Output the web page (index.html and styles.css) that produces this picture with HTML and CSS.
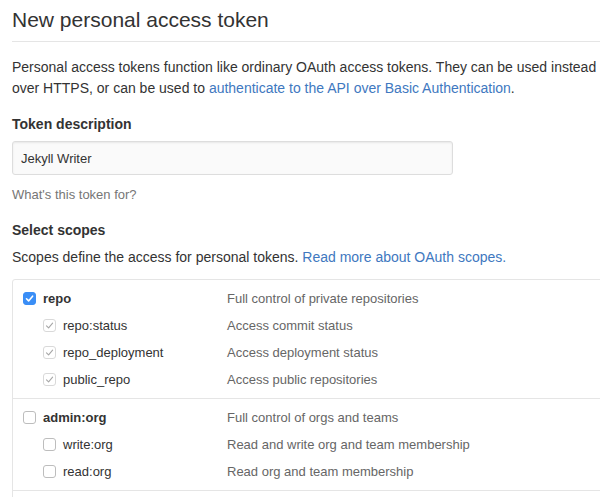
FILE: index.html
```html
<!DOCTYPE html>
<html lang="en">
<head>
<meta charset="utf-8">
<title>New personal access token</title>
<link rel="stylesheet" href="styles.css">
</head>
<body>
<main class="page">
  <div class="subhead">
    <h2 class="subhead-heading">New personal access token</h2>
  </div>
  <p class="intro">Personal access tokens function like ordinary OAuth access tokens. They can be used instead of a password for Git over HTTPS, or can be used to <a href="#">authenticate to the API over Basic Authentication</a>.</p>

  <dl class="form-group">
    <dt><label class="label" for="desc">Token description</label></dt>
    <dd>
      <input class="form-control" id="desc" type="text" value="Jekyll Writer">
      <p class="note">What's this token for?</p>
    </dd>
  </dl>

  <dl class="form-group">
    <dt><span class="label">Select scopes</span></dt>
    <dd>
      <p class="scopes-intro">Scopes define the access for personal tokens. <a href="#">Read more about OAuth scopes.</a></p>
      <div class="scopes">
        <div class="group">
          <div class="row">
            <span class="name top"><span class="cb checked"><svg viewBox="0 0 13 13" width="13" height="13"><path d="M3.5 6.8 L5.6 8.9 L9.6 4.2" fill="none" stroke="#fff" stroke-width="1.6" stroke-linecap="round" stroke-linejoin="round"/></svg></span>repo</span>
            <span class="desc">Full control of private repositories</span>
          </div>
          <div class="row">
            <span class="name sub"><span class="cb implied"><svg viewBox="0 0 13 13" width="13" height="13"><path d="M3.5 6.8 L5.6 8.9 L9.6 4.2" fill="none" stroke="#a6a6a6" stroke-width="1.1" stroke-linecap="round" stroke-linejoin="round"/></svg></span>repo:status</span>
            <span class="desc">Access commit status</span>
          </div>
          <div class="row">
            <span class="name sub"><span class="cb implied"><svg viewBox="0 0 13 13" width="13" height="13"><path d="M3.5 6.8 L5.6 8.9 L9.6 4.2" fill="none" stroke="#a6a6a6" stroke-width="1.1" stroke-linecap="round" stroke-linejoin="round"/></svg></span>repo_deployment</span>
            <span class="desc">Access deployment status</span>
          </div>
          <div class="row">
            <span class="name sub"><span class="cb implied"><svg viewBox="0 0 13 13" width="13" height="13"><path d="M3.5 6.8 L5.6 8.9 L9.6 4.2" fill="none" stroke="#a6a6a6" stroke-width="1.1" stroke-linecap="round" stroke-linejoin="round"/></svg></span>public_repo</span>
            <span class="desc">Access public repositories</span>
          </div>
        </div>
        <div class="group">
          <div class="row">
            <span class="name top"><span class="cb"></span>admin:org</span>
            <span class="desc">Full control of orgs and teams</span>
          </div>
          <div class="row">
            <span class="name sub"><span class="cb"></span>write:org</span>
            <span class="desc">Read and write org and team membership</span>
          </div>
          <div class="row">
            <span class="name sub"><span class="cb"></span>read:org</span>
            <span class="desc">Read org and team membership</span>
          </div>
        </div>
        <div class="group">
          <div class="row">
            <span class="name top"><span class="cb"></span>admin:public_key</span>
            <span class="desc">Full control of user public keys</span>
          </div>
          <div class="row">
            <span class="name sub"><span class="cb"></span>write:public_key</span>
            <span class="desc">Write user public keys</span>
          </div>
          <div class="row">
            <span class="name sub"><span class="cb"></span>read:public_key</span>
            <span class="desc">Read user public keys</span>
          </div>
        </div>
      </div>
    </dd>
  </dl>
</main>
</body>
</html>
```
FILE: styles.css
```css
html, body {
  margin: 0;
  padding: 0;
  background: #fff;
  overflow: hidden;
}

body {
  font-family: "Liberation Sans", Arial, Helvetica, sans-serif;
  font-size: 14px;
  line-height: 1.5;
  color: #333;
}

a {
  color: #4078c0;
  text-decoration: none;
}

.page {
  width: 728px;
  padding: 5px 12px 0 12px;
}

.subhead {
  padding-bottom: 6px;
  border-bottom: 1px solid #e5e5e5;
  margin-bottom: 15px;
}

.subhead-heading {
  margin: 0;
  font-size: 21px;
  font-weight: normal;
  line-height: 30px;
}

.intro {
  margin: 0 0 15px 0;
}

.form-group {
  margin: 0 0 15px 0;
}

.form-group dt {
  margin: 0 0 6px 0;
}

.form-group dd {
  margin: 0;
}

.label {
  font-weight: bold;
}

.form-control {
  display: block;
  box-sizing: border-box;
  width: 441px;
  height: 34px;
  margin: 0;
  padding: 6px 8px;
  font-family: inherit;
  font-size: 13px;
  line-height: 20px;
  color: #333;
  background: #fafafa;
  border: 1px solid #ddd;
  border-radius: 3px;
  box-shadow: inset 0 1px 2px rgba(0, 0, 0, 0.075);
  outline: none;
}

.note {
  margin: 10px 0 2px;
  font-size: 13px;
  color: #767676;
}

.scopes-intro {
  margin: 0 0 11px 0;
}

.scopes {
  border: 1px solid #e5e5e5;
  border-radius: 3px;
}

.group {
  padding: 5px 10px;
  border-bottom: 1px solid #e5e5e5;
}

.row {
  display: flex;
  padding: 3px 0;
  font-size: 13px;
  line-height: 21px;
}

.name {
  display: flex;
  align-items: center;
  width: 204px;
  flex: none;
}

.name.top {
  font-weight: bold;
}

.name.sub {
  padding-left: 20px;
  box-sizing: border-box;
}

.desc {
  color: #666;
}

.cb {
  display: inline-block;
  box-sizing: border-box;
  width: 13px;
  height: 13px;
  margin-right: 7px;
  border: 1px solid #bdbdbd;
  border-radius: 3px;
  background: #fff;
  flex: none;
  position: relative;
}

.cb svg {
  position: absolute;
  left: -1px;
  top: -1px;
}

.cb.checked {
  background: #3a8ef6;
  border-color: #3a8ef6;
}

.cb.implied {
  border-color: #d9d9d9;
}
```
